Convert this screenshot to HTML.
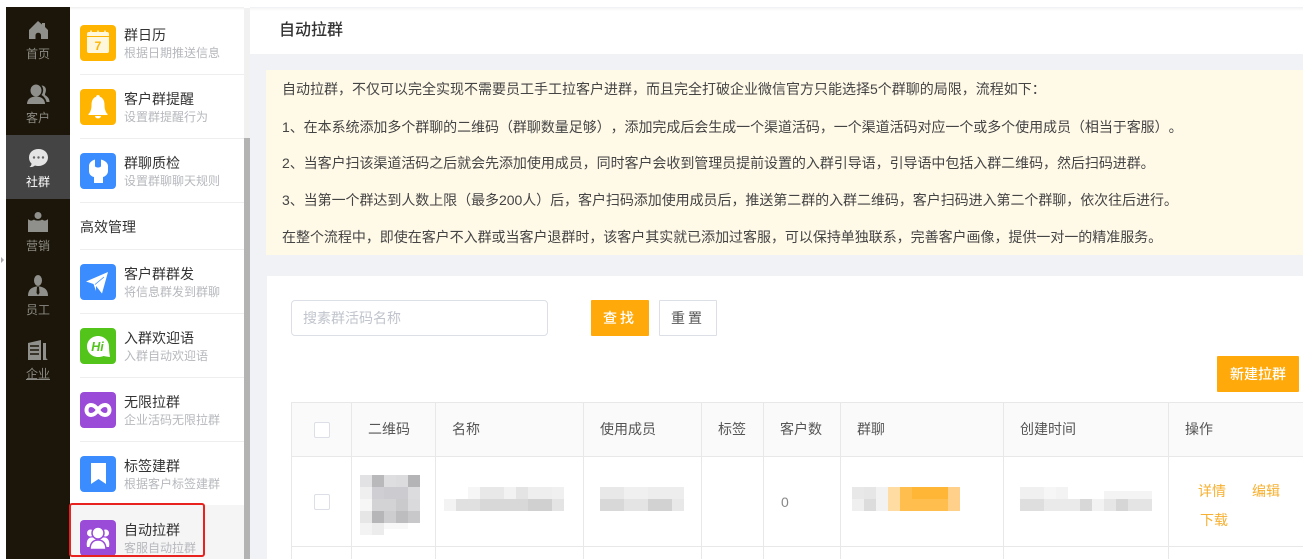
<!DOCTYPE html>
<html><head><meta charset="utf-8"><style>
*{box-sizing:border-box;margin:0;padding:0}
html,body{width:1303px;height:559px;overflow:hidden;background:#fff}
body{position:relative;font-family:"Liberation Sans","Noto Sans CJK SC",sans-serif;color:#444;text-spacing-trim:space-all}
.a{position:absolute}
.t{position:absolute;white-space:nowrap;line-height:1}
.nav{position:absolute;left:6px;width:64px;text-align:center;font-size:12px;color:#8b8a84;line-height:1}
.ic{position:absolute;left:80px;width:36px;height:36px;border-radius:4px}
.ic svg{display:block}
.h{position:absolute;left:124px;font-size:14px;color:#333;line-height:1;white-space:nowrap}
.s{position:absolute;left:124px;font-size:12px;color:#b6b8bd;line-height:1;white-space:nowrap}
.l{position:absolute;left:80px;width:164px;height:1px;background:#eeeeee}
.n{position:absolute;left:282px;font-size:14px;color:#444;line-height:1;white-space:nowrap;letter-spacing:-.05px}
.v{position:absolute;width:1px;background:#e8e8e8;top:402px;height:157px}
.hd{position:absolute;top:422px;font-size:14px;color:#555;line-height:1;white-space:nowrap}
</style></head><body>
<!-- left dark nav -->
<div class="a" style="left:6px;top:7px;width:64px;height:552px;background:#1b1609"></div>
<div class="a" style="left:6px;top:135px;width:64px;height:64px;background:#444444"></div>
<div class="a" style="left:1px;top:257px;width:0;height:0;border-left:3px solid #aaa;border-top:3px solid transparent;border-bottom:3px solid transparent"></div>

<svg class="a" style="left:28px;top:20px" width="21" height="20" viewBox="0 0 21 20"><path d="M10 1 L14 4.500 V3 H17 V7 L20 10 V19 H13 V15 A2.800 2.800 0 0 0 7.500 15 V19 H1 V10 Z" fill="#8f8f8b"/></svg>
<div class="nav" style="top:48px">首页</div>
<svg class="a" style="left:26px;top:84px" width="24" height="21" viewBox="0 0 24 21"><ellipse cx="10" cy="6.500" rx="5.500" ry="6" fill="#8f8f8b"/><path d="M1 20 C1 15 5 12.500 10 12.500 C15 12.500 19 15 19 20 Z" fill="#8f8f8b"/><path d="M15.500 1.500 C19 1.500 20.500 4.500 19.800 7.500 C19.300 9.500 18.500 10.500 19.500 11.500 C21.500 12.500 23.500 14.500 23.500 18 H20.500 C20 15 18 12.500 15.500 11 C17.500 8.500 18 4.500 15.500 1.500 Z" fill="#8f8f8b"/></svg>
<div class="nav" style="top:112px">客户</div>
<svg class="a" style="left:27px;top:148px" width="22" height="20" viewBox="0 0 22 20"><path d="M11.500 1 C17 1 21 4.500 21 9.500 C21 14 17 18 11.500 18 C10 18 9 17.800 8 17.500 C6 19 4.500 19.200 2.500 19 C3.800 18 4.500 17 4.500 15.500 C2.800 14 2 11.800 2 9.500 C2 4.500 6 1 11.500 1 Z" fill="#e4e4e4"/><circle cx="7" cy="9.500" r="1.200" fill="#666"/><circle cx="11.500" cy="9.500" r="1.200" fill="#666"/><circle cx="16" cy="9.500" r="1.200" fill="#666"/></svg>
<div class="nav" style="top:176px;color:#fff">社群</div>
<svg class="a" style="left:28px;top:212px" width="20" height="20" viewBox="0 0 20 20"><circle cx="10" cy="3.500" r="3.500" fill="#8f8f8b"/><path d="M0 7 C2 9 4 9 6 7.500 C7 9 13 9 14 7.500 C16 9 18 9 20 7 V20 H0 Z" fill="#8f8f8b"/></svg>
<div class="nav" style="top:240px">营销</div>
<svg class="a" style="left:28px;top:275px" width="20" height="21" viewBox="0 0 20 21"><ellipse cx="10" cy="5.500" rx="4" ry="5.500" fill="#8f8f8b"/><path d="M0 21 C0 15 3 12.500 8 11.500 H12 C17 12.500 20 15 20 21 Z" fill="#8f8f8b"/><path d="M9 12 H11 L11.500 18 L10 20 L8.500 18 Z" fill="#1b1609"/></svg>
<div class="nav" style="top:304px">员工</div>
<svg class="a" style="left:28px;top:340px" width="20" height="21" viewBox="0 0 20 21"><path d="M0 3 L13 0 V20 H0 Z" fill="#8f8f8b"/><path d="M2 6H11M2 10H11M2 14H11" stroke="#1b1609" stroke-width="1.500"/><path d="M15 3 H18 V17 C18 18.500 19 19.500 20 20 H15 Z" fill="#8f8f8b"/></svg>
<div class="nav" style="top:368px;text-decoration:underline">企业</div>

<!-- scrollbar -->
<div class="a" style="left:244px;top:8px;width:6px;height:551px;background:#f1f1f1"></div>
<div class="a" style="left:244px;top:138px;width:6px;height:421px;background:#b3b3b3"></div>
<div class="a" style="left:70px;top:7px;width:174px;height:3px;background:linear-gradient(#eeeeee,#fff)"></div>

<!-- second panel -->
<div class="ic" style="top:25px;background:#ffb400"><svg width="36" height="36" viewBox="0 0 36 36"><path d="M7 9 a2 2 0 0 1 2-2 h18 a2 2 0 0 1 2 2 v17 a2 2 0 0 1-2 2 H9 a2 2 0 0 1-2-2 Z" fill="#fff7dc"/><path d="M7 11.500 h22" stroke="#ffb400" stroke-width="1"/><path d="M11 5.500v3M18 5.500v3M25 5.500v3" stroke="#fff7dc" stroke-width="1.500"/><text x="18" y="25" text-anchor="middle" font-size="12" font-weight="bold" fill="#ffb400" font-family="Liberation Sans">7</text></svg></div>
<div class="h" style="top:28px">群日历</div><div class="s" style="top:47px">根据日期推送信息</div>
<div class="l" style="top:74px"></div>
<div class="ic" style="top:89px;background:#ffb400"><svg width="36" height="36" viewBox="0 0 36 36"><path d="M18 6 a1.800 1.800 0 0 1 1.800 1.800 C23.500 9 24.500 12.500 24.500 16 C24.500 20 25.500 23 27.500 25 V26 H8.500 V25 C10.500 23 11.500 20 11.500 16 C11.500 12.500 12.500 9 16.200 7.800 A1.800 1.800 0 0 1 18 6 Z" fill="#fff"/><path d="M15 27 h6 a3 2.500 0 0 1-6 0 Z" fill="#fff"/></svg></div>
<div class="h" style="top:92px">客户群提醒</div><div class="s" style="top:111px">设置群提醒行为</div>
<div class="l" style="top:138px"></div>
<div class="ic" style="top:153px;background:#3a8cff"><svg width="36" height="36" viewBox="0 0 36 36"><path d="M15 6.500 V13 C15 15 21 15 21 13 V6.500 C25 7.500 28 10 28 13 V18 C28 21 25.500 23.500 23 24 V30 H14 V24 C11 23.500 9 21 9 18 V13 C9 10 11.500 7.500 15 6.500 Z" fill="#fff"/></svg></div>
<div class="h" style="top:156px">群聊质检</div><div class="s" style="top:175px">设置群聊聊天规则</div>
<div class="l" style="top:202px"></div>
<div class="h" style="top:220px;left:80px">高效管理</div>
<div class="l" style="top:249px"></div>
<div class="ic" style="top:264px;background:#3a8cff"><svg width="36" height="36" viewBox="0 0 36 36"><path d="M6 17.500 L28 8 L22 29.500 L16 22 L16 27 L13.500 20 Z" fill="#fff"/><path d="M15 20.500 L24 13" stroke="#3a8cff" stroke-width=".8"/></svg></div>
<div class="h" style="top:267px">客户群群发</div><div class="s" style="top:286px">将信息群发到群聊</div>
<div class="l" style="top:313px"></div>
<div class="ic" style="top:328px;background:#52c41a"><svg width="36" height="36" viewBox="0 0 36 36"><path d="M18 8 C24 8 29 12.500 29 18.500 C29 22 29.500 26 30 29 C27 28.500 25 28.500 23.500 28 C22 28.800 20 29 18 29 C12 29 7 24.500 7 18.500 C7 12.500 12 8 18 8 Z" fill="#fff"/><text x="17.500" y="23" text-anchor="middle" font-size="12.500" font-weight="bold" font-style="italic" fill="#52c41a" font-family="Liberation Sans">Hi</text></svg></div>
<div class="h" style="top:331px">入群欢迎语</div><div class="s" style="top:350px">入群自动欢迎语</div>
<div class="l" style="top:377px"></div>
<div class="ic" style="top:392px;background:#9a4bd8"><svg width="36" height="36" viewBox="0 0 36 36"><path d="M18 18 C15.500 14 13.500 13 11 13 C8 13 6.500 15.500 6.500 18 C6.500 20.500 8 23 11 23 C13.500 23 15.500 22 18 18 C20.500 14 22.500 13 25 13 C28 13 29.500 15.500 29.500 18 C29.500 20.500 28 23 25 23 C22.500 23 20.500 22 18 18 Z" fill="none" stroke="#fff" stroke-width="4"/></svg></div>
<div class="h" style="top:395px">无限拉群</div><div class="s" style="top:414px">企业活码无限拉群</div>
<div class="l" style="top:441px"></div>
<div class="ic" style="top:456px;background:#3a8cff"><svg width="36" height="36" viewBox="0 0 36 36"><path d="M11 7 H26 V28 L18.500 23 L11 28 Z" fill="#fff"/></svg></div>
<div class="h" style="top:459px">标签建群</div><div class="s" style="top:478px">根据客户标签建群</div>
<div class="a" style="left:70px;top:505px;width:174px;height:54px;background:#f5f5f5"></div>
<div class="ic" style="top:520px;background:#9a4bd8"><svg width="36" height="36" viewBox="0 0 36 36"><circle cx="10.500" cy="13" r="3.500" fill="#fff"/><circle cx="25.500" cy="13" r="3.500" fill="#fff"/><path d="M7 27 C6 22 7.500 18 11 17.500 H25 C28.500 18 30 22 29 27 Z" fill="#fff"/><circle cx="18" cy="13" r="6" fill="#fff" stroke="#9a4bd8" stroke-width="1.500"/><path d="M10 29.500 C10 23.500 13 20 18 20 C23 20 26 23.500 26 29.500 Z" fill="#fff" stroke="#9a4bd8" stroke-width="1.500"/></svg></div>
<div class="h" style="top:523px">自动拉群</div><div class="s" style="top:542px">客服自动拉群</div>
<div class="a" style="left:69px;top:503px;width:136px;height:54px;border:2px solid #e8231f;border-radius:3px"></div>

<!-- main -->
<div class="a" style="left:250px;top:7px;width:1053px;height:552px;background:#f0f2f5"></div>
<div class="a" style="left:250px;top:8px;width:1053px;height:46px;background:linear-gradient(#f6f6f6,#fff 3px)"></div>
<div class="t" style="left:279px;top:23px;font-size:16px;color:#333;font-weight:500">自动拉群</div>

<div class="a" style="left:266px;top:70px;width:1037px;height:185px;background:#fff9e8"></div>
<div class="n" style="top:82px;letter-spacing:0">自动拉群，不仅可以完全实现不需要员工手工拉客户进群，而且完全打破企业微信官方只能选择5个群聊的局限，流程如下：</div>
<div class="n" style="top:120px">1、在本系统添加多个群聊的二维码（群聊数量足够），添加完成后会生成一个渠道活码，一个渠道活码对应一个或多个使用成员（相当于客服）。</div>
<div class="n" style="top:156px">2、当客户扫该渠道活码之后就会先添加使用成员，同时客户会收到管理员提前设置的入群引导语，引导语中包括入群二维码，然后扫码进群。</div>
<div class="n" style="top:193px">3、当第一个群达到人数上限（最多200人）后，客户扫码添加使用成员后，推送第二群的入群二维码，客户扫码进入第二个群聊，依次往后进行。</div>
<div class="n" style="top:230px;letter-spacing:-.03px">在整个流程中，即使在客户不入群或当客户退群时，该客户其实就已添加过客服，可以保持单独联系，完善客户画像，提供一对一的精准服务。</div>

<div class="a" style="left:267px;top:276px;width:1036px;height:283px;background:#fff"></div>
<div class="a" style="left:291px;top:300px;width:257px;height:36px;border:1px solid #dcdfe6;border-radius:4px;background:#fff"></div>
<div class="t" style="left:303px;top:311px;font-size:14px;color:#c0c4cc">搜素群活码名称</div>
<div class="a" style="left:591px;top:300px;width:58px;height:36px;background:#ffa90b;border-radius:1px;color:#fff;font-size:14px;font-weight:500;line-height:36px;text-align:center;letter-spacing:3px">查找</div>
<div class="a" style="left:659px;top:300px;width:58px;height:36px;background:#fff;border:1px solid #dcdfe6;border-radius:1px;color:#555;font-size:14px;line-height:34px;text-align:center;letter-spacing:3px">重置</div>
<div class="a" style="left:1217px;top:356px;width:82px;height:36px;background:#ffa90b;border-radius:1px;color:#fff;font-size:14px;font-weight:500;line-height:36px;text-align:center">新建拉群</div>

<!-- table -->
<div class="a" style="left:291px;top:402px;width:1012px;height:54px;background:#fafafa"></div>
<div class="a" style="left:291px;top:402px;width:1012px;height:1px;background:#e8e8e8"></div>
<div class="a" style="left:291px;top:456px;width:1012px;height:1px;background:#e8e8e8"></div>
<div class="a" style="left:291px;top:546px;width:1012px;height:1px;background:#e8e8e8"></div>
<div class="v" style="left:291px"></div><div class="v" style="left:351px"></div><div class="v" style="left:435px"></div><div class="v" style="left:583px"></div><div class="v" style="left:701px"></div><div class="v" style="left:763px"></div><div class="v" style="left:840px"></div><div class="v" style="left:1003px"></div><div class="v" style="left:1168px"></div>
<div class="a" style="left:314px;top:422px;width:16px;height:16px;border:1px solid #dcdfe6;border-radius:2px;background:#fff"></div>
<div class="a" style="left:314px;top:494px;width:16px;height:16px;border:1px solid #dcdfe6;border-radius:2px;background:#fff"></div>
<div class="hd" style="left:368px">二维码</div>
<div class="hd" style="left:452px">名称</div>
<div class="hd" style="left:600px">使用成员</div>
<div class="hd" style="left:718px">标签</div>
<div class="hd" style="left:780px">客户数</div>
<div class="hd" style="left:857px">群聊</div>
<div class="hd" style="left:1020px">创建时间</div>
<div class="hd" style="left:1185px">操作</div>
<div class="t" style="left:781px;top:495px;font-size:14px;color:#888">0</div>
<div class="t" style="left:1198px;top:484px;font-size:14px;color:#f7b030">详情</div>
<div class="t" style="left:1252px;top:484px;font-size:14px;color:#f7b030">编辑</div>
<div class="t" style="left:1200px;top:513px;font-size:14px;color:#f7b030">下载</div>

<!-- mosaics -->
<svg class="a" style="left:360px;top:475px" width="60" height="60" viewBox="0 0 60 60" shape-rendering="crispEdges">
<rect x="0" y="0" width="12" height="12" fill="#e2e2e4"/><rect x="12" y="0" width="12" height="12" fill="#b9b9bc"/><rect x="24" y="0" width="12" height="12" fill="#dedee0"/><rect x="36" y="0" width="12" height="12" fill="#dcdcde"/><rect x="48" y="0" width="12" height="12" fill="#b4b4b7"/>
<rect x="0" y="12" width="12" height="12" fill="#efeff0"/><rect x="12" y="12" width="12" height="12" fill="#cfcfd3"/><rect x="24" y="12" width="12" height="12" fill="#cbcbd0"/><rect x="36" y="12" width="12" height="12" fill="#cbcbd0"/><rect x="48" y="12" width="12" height="12" fill="#dcdcdf"/>
<rect x="0" y="24" width="12" height="12" fill="#f6f6f6"/><rect x="12" y="24" width="12" height="12" fill="#d3d3d6"/><rect x="24" y="24" width="12" height="12" fill="#d3d3d6"/><rect x="36" y="24" width="12" height="12" fill="#cacacd"/><rect x="48" y="24" width="12" height="12" fill="#dadadc"/>
<rect x="0" y="36" width="12" height="12" fill="#e6e6e7"/><rect x="12" y="36" width="12" height="12" fill="#b6b6b8"/><rect x="24" y="36" width="12" height="12" fill="#cdcdcf"/><rect x="36" y="36" width="12" height="12" fill="#bdbdc0"/><rect x="48" y="36" width="12" height="12" fill="#c8c8ca"/>
<rect x="0" y="48" width="12" height="12" fill="#f3f3f3"/><rect x="12" y="48" width="12" height="12" fill="#ececec"/><rect x="24" y="48" width="24" height="6" fill="#f8f8f8"/>
</svg>
<svg class="a" style="left:444px;top:487px" width="120" height="24" viewBox="0 0 120 24" shape-rendering="crispEdges">
<rect x="24" y="0" width="12" height="12" fill="#f6f6f6"/><rect x="36" y="0" width="24" height="12" fill="#e8e8e8"/><rect x="60" y="0" width="12" height="12" fill="#f2f2f2"/><rect x="72" y="0" width="12" height="12" fill="#e4e4e4"/><rect x="84" y="0" width="24" height="12" fill="#eeeeee"/><rect x="108" y="0" width="12" height="12" fill="#f0f0f0"/>
<rect x="0" y="12" width="12" height="12" fill="#f3f3f3"/><rect x="12" y="12" width="24" height="12" fill="#e0e0e0"/><rect x="36" y="12" width="48" height="12" fill="#d8d8d8"/><rect x="84" y="12" width="24" height="12" fill="#d0d0d0"/><rect x="108" y="12" width="12" height="12" fill="#e4e4e4"/>
</svg>
<svg class="a" style="left:600px;top:487px" width="84" height="24" viewBox="0 0 84 24" shape-rendering="crispEdges">
<rect x="0" y="0" width="24" height="12" fill="#e8e8e8"/><rect x="24" y="0" width="24" height="12" fill="#f0f0f0"/><rect x="48" y="0" width="36" height="12" fill="#ededed"/>
<rect x="0" y="12" width="24" height="12" fill="#d8d8d8"/><rect x="24" y="12" width="24" height="12" fill="#e4e4e4"/><rect x="48" y="12" width="24" height="12" fill="#d2d2d2"/><rect x="72" y="12" width="12" height="12" fill="#e8e8e8"/>
</svg>
<svg class="a" style="left:852px;top:487px" width="108" height="24" viewBox="0 0 108 24" shape-rendering="crispEdges">
<rect x="0" y="0" width="12" height="12" fill="#e8e8e8"/><rect x="12" y="0" width="12" height="12" fill="#e6e6e6"/><rect x="24" y="0" width="12" height="24" fill="#f2f2f2"/><rect x="0" y="12" width="12" height="12" fill="#efefef"/><rect x="12" y="12" width="12" height="12" fill="#dcdcdc"/>
<rect x="36" y="0" width="12" height="24" fill="#fedca2"/><rect x="48" y="0" width="48" height="24" fill="#ffbe4d"/><rect x="60" y="0" width="36" height="12" fill="#ffb636"/><rect x="96" y="0" width="12" height="24" fill="#fed08a"/>
</svg>
<svg class="a" style="left:1020px;top:487px" width="132" height="24" viewBox="0 0 132 24" shape-rendering="crispEdges">
<rect x="0" y="0" width="24" height="12" fill="#f0f0f0"/><rect x="24" y="0" width="12" height="12" fill="#f6f6f6"/><rect x="36" y="0" width="12" height="12" fill="#f3f3f3"/><rect x="84" y="4" width="48" height="8" fill="#f4f4f4"/>
<rect x="0" y="12" width="24" height="12" fill="#dedede"/><rect x="24" y="12" width="36" height="12" fill="#eaeaea"/><rect x="60" y="12" width="12" height="12" fill="#d8d8d8"/><rect x="72" y="12" width="12" height="12" fill="#f2f2f2"/><rect x="84" y="12" width="12" height="12" fill="#e6e6e6"/><rect x="96" y="12" width="12" height="12" fill="#d6d6d6"/><rect x="108" y="12" width="24" height="12" fill="#e4e4e4"/>
</svg>
</body></html>
